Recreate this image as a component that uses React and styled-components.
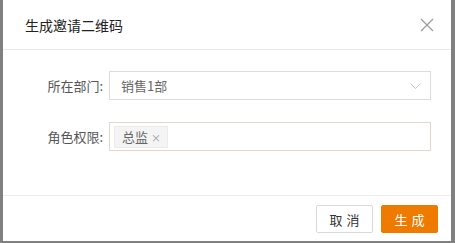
import React from 'react';
import styled, { createGlobalStyle } from 'styled-components';

const GlobalStyle = createGlobalStyle`
  html, body {
    margin: 0;
    padding: 0;
    background: #808080;
    font-family: 'Noto Sans CJK SC', 'Noto Sans', sans-serif;
  }
`;

const Mask = styled.div`
  width: 455px;
  height: 243px;
  background: #808080;
  overflow: hidden;
  padding-left: 3px;
  box-sizing: border-box;
`;

const Dialog = styled.div`
  width: 448px;
  height: 241px;
  background: #fff;
  display: flex;
  flex-direction: column;
`;

const Header = styled.div`
  height: 49px;
  border-bottom: 1px solid #e9e9e9;
  display: flex;
  align-items: center;
  justify-content: space-between;
  padding: 0 17px 0 22px;
  box-sizing: content-box;
`;

const Title = styled.h3`
  margin: 0;
  font-size: 14px;
  font-weight: 400;
  color: #222;
`;

const Close = styled.button`
  border: none;
  background: none;
  padding: 0;
  width: 14px;
  height: 14px;
  display: flex;
  cursor: pointer;
`;

const Body = styled.div`
  flex: 1;
  padding: 21px 20px 0 0;
  display: flex;
  flex-direction: column;
  gap: 22px;
`;

const Row = styled.div`
  display: flex;
  align-items: center;
`;

const Label = styled.label`
  width: 100px;
  text-align: right;
  padding-right: 6px;
  font-size: 13px;
  color: #555;
`;

const Field = styled.div`
  flex: 1;
  height: ${(p) => p.$h}px;
  border: 1px solid ${(p) => (p.$focus ? '#e3d6cd' : '#dcdcdc')};
  box-sizing: border-box;
  display: flex;
  align-items: center;
  justify-content: space-between;
  padding: ${(p) => (p.$focus ? '0 4px' : '0 9px 0 11px')};
  font-size: 13px;
  color: #666;
`;

const Tag = styled.span`
  height: 22px;
  display: inline-flex;
  align-items: center;
  gap: 3px;
  padding: 0 6px 0 7px;
  background: #f4f4f4;
  border: 1px solid #ebebeb;
  box-sizing: border-box;
  font-size: 13px;
  color: #666;
`;

const TagClose = styled.span`
  font-size: 10px;
  color: #999;
  line-height: 1;
  padding-top: 2px;
`;

const Footer = styled.div`
  height: 46px;
  border-top: 1px solid #eee;
  display: flex;
  justify-content: flex-end;
  align-items: flex-start;
  gap: 8px;
  padding: 9px 13px 0 0;
  box-sizing: border-box;
`;

const Button = styled.button`
  width: 57px;
  height: 28px;
  border: 1px solid ${(p) => (p.$primary ? '#ee7b00' : '#d9d9d9')};
  background: ${(p) => (p.$primary ? '#ee7b00' : '#fff')};
  color: ${(p) => (p.$primary ? '#fff' : '#333')};
  border-radius: 2px;
  font-family: inherit;
  font-size: 13px;
  letter-spacing: 4px;
  text-indent: 4px;
  padding: 0;
  cursor: pointer;
`;

export default function App() {
  return (
    <>
      <GlobalStyle />
      <Mask>
        <Dialog>
          <Header>
            <Title>生成邀请二维码</Title>
            <Close aria-label="关闭">
              <svg width="14" height="14" viewBox="0 0 14 14">
                <path d="M1 1L13 13M13 1L1 13" stroke="#9a9a9a" strokeWidth="1.2" fill="none" />
              </svg>
            </Close>
          </Header>
          <Body>
            <Row>
              <Label>所在部门:</Label>
              <Field $h={29}>
                <span>销售1部</span>
                <svg width="11" height="6" viewBox="0 0 11 6">
                  <path d="M0.5 0.5L5.5 5.5L10.5 0.5" stroke="#c4c4c4" strokeWidth="1" fill="none" />
                </svg>
              </Field>
            </Row>
            <Row>
              <Label>角色权限:</Label>
              <Field $h={29} $focus>
                <Tag>
                  总监<TagClose>×</TagClose>
                </Tag>
              </Field>
            </Row>
          </Body>
          <Footer>
            <Button>取消</Button>
            <Button $primary>生成</Button>
          </Footer>
        </Dialog>
      </Mask>
    </>
  );
}
